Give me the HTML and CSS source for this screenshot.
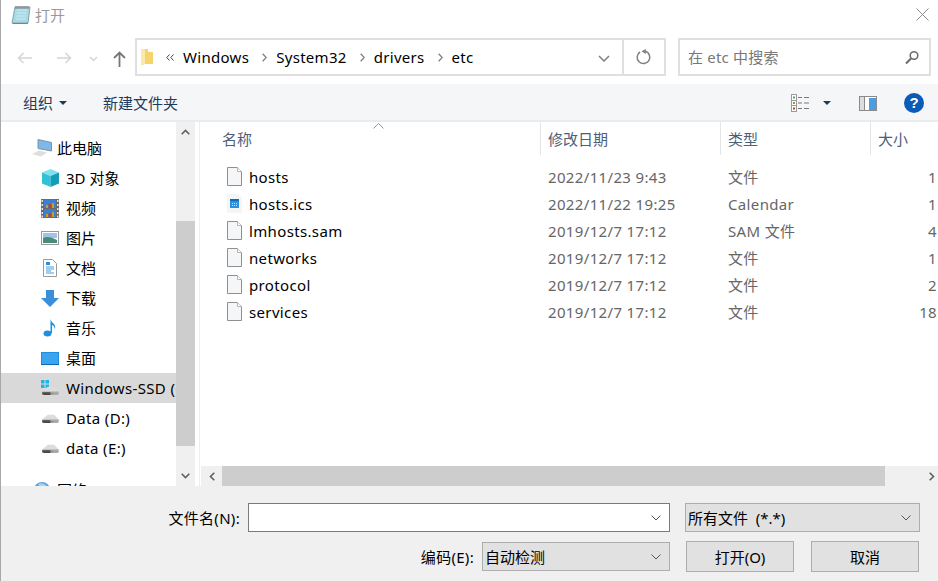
FILE: index.html
```html
<!DOCTYPE html>
<html lang="zh-CN">
<head>
    <meta charset="UTF-8">
    <title>打开</title>
    <link rel="stylesheet" href="styles.css">
</head>
<body>
    <svg class="defs" width="0" height="0">
        <symbol id="file" viewBox="0 0 15 19">
            <path d="M.5.5h10l4 4v14H.5z" fill="#f5f6f7" stroke="#8f8f8f"/>
            <path d="M10.500.5v4h4" fill="#fff" stroke="#b5b5b5"/>
        </symbol>
        <symbol id="drive" viewBox="0 0 20 12">
            <path d="M1 7 7 2h7l5 5-1 4H2z" fill="#dcdcdc"/>
            <path d="M1 7h18v3l-2 1H3l-2-1z" fill="#a9a9a9"/>
            <path d="M1 8h9v3H3l-2-1z" fill="#4b4b4b"/>
            <path d="M10 9h3v1h-3z" fill="#35b558"/>
        </symbol>
    </svg>

    <div class="dialog">
        <header class="titlebar">
            <svg class="title-icon" width="20" height="20" viewBox="0 0 20 20">
                <path d="M4 2h15l-2 16H1z" fill="#a9d9e6" stroke="#7fa7ae"/>
                <path d="M17 18h-16l1 1h15z" fill="#8a8170"/>
                <path d="M6 5h10M5.600 8h10M5.200 11h10M4.800 14h10" stroke="#c9ecf3"/>
                <path d="M5 1v3M7 1v3M9 1v3M11 1v3M13 1v3M15 1v3M17 1v3" stroke="#777"/>
            </svg>
            <span class="title-text">打开</span>
            <svg class="close-icon" width="13" height="13" viewBox="0 0 13 13">
                <path d="M.5.5l12 12M12.500.5l-12 12" stroke="#8c8c8c" fill="none"/>
            </svg>
        </header>

        <nav class="navbar">
            <svg class="nav-back" width="16" height="12" viewBox="0 0 16 12"><path d="M15 6H1.500M6.500 1l-5 5 5 5" stroke="#d5d5d5" stroke-width="1.500" fill="none"/></svg>
            <svg class="nav-forward" width="16" height="12" viewBox="0 0 16 12"><path d="M1 6h13.500M9.500 1l5 5-5 5" stroke="#d5d5d5" stroke-width="1.500" fill="none"/></svg>
            <svg class="nav-down" width="9" height="6" viewBox="0 0 9 6"><path d="M1 1l3.500 3.500L8 1" stroke="#d5d5d5" stroke-width="1.500" fill="none"/></svg>
            <svg class="nav-up" width="13" height="16" viewBox="0 0 13 16"><path d="M6.500 16V2M1 7l5.500-5.500L12 7" stroke="#777" stroke-width="1.800" fill="none"/></svg>
            <div class="address">
                <div class="crumbs">
                    <svg class="folder" width="13" height="18" viewBox="0 0 13 18">
                        <path d="M0 1h7v3h5v12H4l-4 1z" fill="#f6d36c"/>
                        <path d="M0 1h4v15l-4 1z" fill="#fbe9a9"/>
                    </svg>
                    <svg class="crumb-more" width="8" height="7" viewBox="0 0 8 7"><path d="M3.500.5.800 3.500l2.700 3M7.500.5 4.800 3.500l2.700 3" stroke="#444" fill="none"/></svg>
                    <span>Windows</span>
                    <svg class="crumb-sep" width="5" height="9" viewBox="0 0 5 9"><path d="M.7.7l3.500 3.800L.7 8.300" stroke="#808080" stroke-width="1.300" fill="none"/></svg>
                    <span>System32</span>
                    <svg class="crumb-sep" width="5" height="9" viewBox="0 0 5 9"><path d="M.7.7l3.500 3.800L.7 8.300" stroke="#808080" stroke-width="1.300" fill="none"/></svg>
                    <span>drivers</span>
                    <svg class="crumb-sep" width="5" height="9" viewBox="0 0 5 9"><path d="M.7.7l3.500 3.800L.7 8.300" stroke="#808080" stroke-width="1.300" fill="none"/></svg>
                    <span>etc</span>
                    <svg class="crumb-drop" width="12" height="7" viewBox="0 0 12 7"><path d="M1 1l5 5 5-5" stroke="#808080" stroke-width="1.500" fill="none"/></svg>
                </div>
                <div class="refresh">
                    <svg width="16" height="16" viewBox="0 0 16 16"><path d="M9.500 2.300A6.300 6.300 0 1 1 4 3" stroke="#808080" stroke-width="1.500" fill="none"/><path d="M9.800 0v5L5.500 2.300z" fill="#808080"/></svg>
                </div>
            </div>
            <div class="search">
                <span>在 etc 中搜索</span>
                <svg width="14" height="15" viewBox="0 0 14 15"><circle cx="9" cy="5.500" r="3.800" stroke="#6e6e6e" stroke-width="1.600" fill="none"/><path d="M6 8.500 1 13.500" stroke="#6e6e6e" stroke-width="2.200"/></svg>
            </div>
        </nav>

        <div class="toolbar">
            <button class="tool">组织<i class="caret"></i></button>
            <button class="tool tool-new">新建文件夹</button>
            <div class="tool-right">
                <svg class="view-icon" width="18" height="18" viewBox="0 0 18 18">
                    <rect x=".5" y=".5" width="5" height="17" fill="#fff" stroke="#9a9a9a"/>
                    <path d="M1 6.500h4M1 11.500h4" stroke="#9a9a9a"/>
                    <path d="M2 2.500h2v2H2z" fill="#5a9a9a"/><path d="M2 8h2v2H2z" fill="#9a9a40"/><path d="M2 13.500h2v2H2z" fill="#a0502a"/>
                    <path d="M7 3.500h4M13 3.500h5M7 9h4M13 9h5M7 14.500h4M13 14.500h5" stroke="#777"/>
                </svg>
                <i class="caret caret-view"></i>
                <svg class="pane-icon" width="18" height="15" viewBox="0 0 18 15">
                    <rect x=".5" y=".5" width="17" height="14" fill="#fff" stroke="#8a8a8a"/>
                    <path d="M1 1h4v13H1z" fill="#ddd"/><path d="M5.500 1v13" stroke="#8a8a8a"/>
                    <path d="M10 2h7v12h-7z" fill="#4b9ce2"/>
                </svg>
                <div class="help">?</div>
            </div>
        </div>

        <div class="content">
            <aside class="sidebar">
                <ul class="tree">
                    <li class="tree-row tree-root">
                        <svg width="20" height="18" viewBox="0 0 20 18">
                            <path d="M6 .5l13.500 3v8.500L6 9.500z" fill="#7db8e8" stroke="#7d93a8"/>
                            <path d="M0 15l7-3.500 8 2-6 4z" fill="#dedede"/>
                        </svg>
                        <span>此电脑</span>
                    </li>
                    <li class="tree-row">
                        <svg width="19" height="18" viewBox="0 0 19 18">
                            <path d="M9.500 0 18 3.500 9.500 7 1 3.500z" fill="#7fe3ee"/>
                            <path d="M1 3.500 9.500 7v11L1 14.500z" fill="#2fc3d8"/>
                            <path d="M18 3.500 9.500 7v11l8.500-3.500z" fill="#159cb8"/>
                        </svg>
                        <span>3D 对象</span>
                    </li>
                    <li class="tree-row">
                        <svg width="18" height="19" viewBox="0 0 18 19">
                            <rect width="18" height="19" fill="#6a6a6a"/>
                            <path d="M.5 1h1.500v2H.5zM.5 5h1.500v2H.5zM.5 9h1.500v2H.5zM.5 13h1.500v2H.5zM.5 16.500h1.500v2H.5zM16 1h1.500v2H16zM16 5h1.500v2H16zM16 9h1.500v2H16zM16 13h1.500v2H16zM16 16.500h1.500v2H16z" fill="#e4e4e4"/>
                            <path d="M3 1h12v8H3zM3 10h12v8H3z" fill="#3f7fd0"/>
                            <path d="M5 6h2v3H5zM11 4h2v5h-2zM5 15h2v3H5zM11 13h2v5h-2z" fill="#c8a028"/>
                            <path d="M7.500 5h3v4h-3zM7.500 14h3v4h-3z" fill="#b04a30"/>
                        </svg>
                        <span>视频</span>
                    </li>
                    <li class="tree-row">
                        <svg width="18" height="14" viewBox="0 0 18 14">
                            <rect x=".5" y=".5" width="17" height="13" fill="#fff" stroke="#9a9a9a"/>
                            <path d="M2 2h14v5H2z" fill="#9ec4ea"/>
                            <path d="M2 7c4-2 8-1 14 2v3H2z" fill="#4a8a7a"/>
                        </svg>
                        <span>图片</span>
                    </li>
                    <li class="tree-row">
                        <svg width="18" height="18" viewBox="0 0 18 18">
                            <path d="M2.500.5h9l4 4v13h-13z" fill="#fff" stroke="#9a9a9a"/>
                            <path d="M5 3h4v3H5z" fill="#2d8fd8"/>
                            <path d="M5 8h8M5 10h8M5 12h5M5 14h8" stroke="#3d9ce0"/>
                        </svg>
                        <span>文档</span>
                    </li>
                    <li class="tree-row">
                        <svg width="18" height="17" viewBox="0 0 18 17">
                            <path d="M5 0h8v8h5l-9 9-9-9h5z" fill="#3a8edb"/>
                        </svg>
                        <span>下载</span>
                    </li>
                    <li class="tree-row">
                        <svg width="18" height="18" viewBox="0 0 18 18">
                            <ellipse cx="6.500" cy="14.500" rx="4" ry="3" fill="#1f8fe0"/>
                            <path d="M9.500 14V0c.5 4 6 4.500 4.500 10-1-3-2-4-3-4v8z" fill="#1f8fe0"/>
                        </svg>
                        <span>音乐</span>
                    </li>
                    <li class="tree-row">
                        <svg width="18" height="13" viewBox="0 0 18 13">
                            <rect width="18" height="13" fill="#1f8fe0"/>
                            <path d="M1 1h16v11H1z" fill="#3aa4ee"/><path d="M0 12h18v1H0z" fill="#0d6ab8"/>
                        </svg>
                        <span>桌面</span>
                    </li>
                    <li class="tree-row is-selected">
                        <svg width="19" height="16" viewBox="0 0 19 16">
                            <path d="M0 0h3.500v3.500H0zM4.500 0H8v3.500H4.500zM0 4.500h3.500V8H0zM4.500 4.500H8V8H4.500z" fill="#1eb4e8"/>
                            <use href="#drive" y="5" width="19" height="11"/>
                        </svg>
                        <span class="latin">Windows-SSD (C:)</span>
                    </li>
                    <li class="tree-row">
                        <svg width="19" height="11"><use href="#drive" width="19" height="11"/></svg>
                        <span class="latin">Data (D:)</span>
                    </li>
                    <li class="tree-row">
                        <svg width="19" height="11"><use href="#drive" width="19" height="11"/></svg>
                        <span class="latin">data (E:)</span>
                    </li>
                    <li class="tree-row tree-root tree-network">
                        <svg width="20" height="18" viewBox="0 0 20 18">
                            <circle cx="10" cy="9" r="8" fill="#5aa0d8"/>
                            <path d="M6 3c4-2 8 0 9 3-3 2-7 1-9-3z" fill="#a8d4f0"/>
                        </svg>
                        <span>网络</span>
                    </li>
                </ul>
                <div class="vscroll">
                    <div class="scroll-btn">
                        <svg width="9" height="6" viewBox="0 0 9 6"><path d="M.7 5.300 4.500 1.500l3.800 3.800" stroke="#606060" stroke-width="1.600" fill="none"/></svg>
                    </div>
                    <div class="vscroll-track"><div class="vscroll-thumb"></div></div>
                    <div class="scroll-btn">
                        <svg width="9" height="6" viewBox="0 0 9 6"><path d="M.7.700 4.500 4.500l3.800-3.800" stroke="#606060" stroke-width="1.600" fill="none"/></svg>
                    </div>
                </div>
            </aside>

            <main class="files">
                <div class="list-area">
                    <div class="list-head">
                        <div class="col-head col-name">名称<svg class="sort" width="11" height="6" viewBox="0 0 11 6"><path d="M.5 5.500l5-5 5 5" stroke="#999" fill="none"/></svg></div>
                        <div class="col-head col-date">修改日期</div>
                        <div class="col-head col-type">类型</div>
                        <div class="col-head col-size">大小</div>
                    </div>
                    <div class="list-body">
                        <div class="file-row">
                            <div class="cell-name"><svg width="15" height="19"><use href="#file"/></svg>hosts</div>
                            <div class="cell">2022/11/23 9:43</div><div class="cell">文件</div><div class="cell-size">1 KB</div>
                        </div>
                        <div class="file-row">
                            <div class="cell-name">
                                <svg width="15" height="19" viewBox="0 0 15 19">
                                    <path d="M0 0h11l4 4v15H0z" fill="#f3f5f7"/>
                                    <path d="M3 5h9v9H3z" fill="#2e8fdc"/><path d="M3 5h9v2H3z" fill="#136bb5"/>
                                    <path d="M5 9h1v1H5zM7 9h1v1H7zM9 9h1v1H9zM5 11h1v1H5zM7 11h1v1H7zM9 11h1v1H9z" fill="#bfe0f8"/>
                                </svg>hosts.ics</div>
                            <div class="cell">2022/11/22 19:25</div><div class="cell">Calendar</div><div class="cell-size">1 KB</div>
                        </div>
                        <div class="file-row">
                            <div class="cell-name"><svg width="15" height="19"><use href="#file"/></svg>lmhosts.sam</div>
                            <div class="cell">2019/12/7 17:12</div><div class="cell">SAM 文件</div><div class="cell-size">4 KB</div>
                        </div>
                        <div class="file-row">
                            <div class="cell-name"><svg width="15" height="19"><use href="#file"/></svg>networks</div>
                            <div class="cell">2019/12/7 17:12</div><div class="cell">文件</div><div class="cell-size">1 KB</div>
                        </div>
                        <div class="file-row">
                            <div class="cell-name"><svg width="15" height="19"><use href="#file"/></svg>protocol</div>
                            <div class="cell">2019/12/7 17:12</div><div class="cell">文件</div><div class="cell-size">2 KB</div>
                        </div>
                        <div class="file-row">
                            <div class="cell-name"><svg width="15" height="19"><use href="#file"/></svg>services</div>
                            <div class="cell">2019/12/7 17:12</div><div class="cell">文件</div><div class="cell-size">18 KB</div>
                        </div>
                    </div>
                </div>
                <div class="hscroll">
                    <div class="hscroll-btn">
                        <svg width="6" height="9" viewBox="0 0 6 9"><path d="M5.300.7 1.500 4.500l3.800 3.800" stroke="#606060" stroke-width="1.600" fill="none"/></svg>
                    </div>
                    <div class="hscroll-thumb"></div>
                    <div class="hscroll-rest">
                        <svg width="6" height="9" viewBox="0 0 6 9"><path d="M.7.7l3.800 3.800L.7 8.300" stroke="#606060" stroke-width="1.600" fill="none"/></svg>
                    </div>
                </div>
            </main>
        </div>

        <footer class="footer">
            <div class="form-row">
                <label class="field-label">文件名(N):</label>
                <div class="combo combo-name"><svg width="10" height="6" viewBox="0 0 10 6"><path d="M.5.500 5 5 9.500.5" stroke="#555" fill="none"/></svg></div>
                <div class="combo combo-filter"><span>所有文件&nbsp; (*.*)</span><svg width="10" height="6" viewBox="0 0 10 6"><path d="M.5.500 5 5 9.500.5" stroke="#555" fill="none"/></svg></div>
            </div>
            <div class="form-row form-row-second">
                <label class="field-label">编码(E):</label>
                <div class="combo combo-encoding"><span>自动检测</span><svg width="10" height="6" viewBox="0 0 10 6"><path d="M.5.500 5 5 9.500.5" stroke="#555" fill="none"/></svg></div>
                <button class="btn btn-open">打开(O)</button>
                <button class="btn btn-cancel">取消</button>
            </div>
        </footer>
    </div>
</body>
</html>
```

FILE: styles.css
```css
* {
    box-sizing: border-box;
}
html, body {
    margin: 0;
    padding: 0;
    width: 938px;
    height: 581px;
    overflow: hidden;
}
body {
    font-family: "Noto Sans", "Noto Sans CJK SC", sans-serif;
    font-size: 15px;
    line-height: 20px;
    color: #000;
    background: #fff;
}
svg {
    display: block;
    flex: none;
}
.defs {
    position: absolute;
}
.latin {
    letter-spacing: .35px;
}
.dialog {
    width: 938px;
    height: 581px;
    display: flex;
    flex-direction: column;
    border-left: 1px solid #a8a8a8;
    overflow: hidden;
}

/* title */
.titlebar {
    height: 38px;
    display: flex;
    align-items: flex-start;
    padding: 5px 9px 0 10px;
}
.title-text {
    margin-left: 4px;
    color: #9a9a9a;
}
.close-icon {
    margin-left: auto;
    margin-top: 3px;
}

/* nav */
.navbar {
    height: 46px;
    display: flex;
    align-items: flex-start;
}
.nav-back {
    margin: 14px 0 0 16px;
}
.nav-forward {
    margin: 14px 0 0 23px;
}
.nav-down {
    margin: 18px 0 0 17px;
}
.nav-up {
    margin: 13px 0 0 15px;
}
.address {
    margin-left: 9px;
    width: 531px;
    height: 38px;
    display: flex;
    border: 2px solid #dfdfdf;
}
.crumbs {
    flex: 1;
    display: flex;
    align-items: center;
    padding-left: 4px;
    letter-spacing: .3px;
}
.crumb-more {
    margin: 0 9px 0 12px;
}
.crumb-sep {
    margin: 0 9px 0 13px;
}
.crumb-drop {
    margin: 2px 12px 0 auto;
}
.refresh {
    width: 42px;
    border-left: 2px solid #dfdfdf;
    display: flex;
    align-items: center;
    justify-content: center;
}
.search {
    margin: 0 0 0 12px;
    width: 253px;
    height: 38px;
    display: flex;
    align-items: center;
    justify-content: space-between;
    padding: 0 10px 0 8px;
    border: 2px solid #dfdfdf;
    color: #777;
    letter-spacing: .2px;
}

/* toolbar */
.toolbar {
    height: 38px;
    display: flex;
    align-items: center;
    padding: 2px 14px 0 22px;
    background: #f5f6f7;
    border-bottom: 2px solid #e9ebee;
}
.tool {
    border: 0;
    padding: 0;
    background: none;
    font: inherit;
    color: #1f3a5c;
    display: flex;
    align-items: center;
}
.tool-new {
    margin-left: 36px;
}
.caret {
    display: inline-block;
    width: 0;
    height: 0;
    margin-left: 6px;
    border: 4px solid transparent;
    border-top: 4px solid #1f3a5c;
    border-bottom: 0;
}
.tool-right {
    margin-left: auto;
    display: flex;
    align-items: center;
}
.caret-view {
    margin-left: 14px;
}
.pane-icon {
    margin-left: 28px;
}
.help {
    width: 20px;
    height: 20px;
    margin-left: 27px;
    border-radius: 50%;
    background: #0a5cb8;
    color: #fff;
    font-family: "Liberation Sans", sans-serif;
    font-weight: bold;
    line-height: 20px;
    text-align: center;
}

/* main area */
.content {
    height: 364px;
    display: flex;
}
.sidebar {
    width: 194px;
    flex: none;
    display: flex;
}
.tree {
    list-style: none;
    margin: 11px 0 0;
    padding: 0;
    width: 175px;
    height: 353px;
    overflow: hidden;
}
.tree-row {
    height: 30px;
    display: flex;
    align-items: center;
    white-space: nowrap;
    overflow: hidden;
    padding-left: 40px;
}
.tree-row svg + span {
    margin-left: auto;
    width: 110px;
    flex: none;
}
.tree-root {
    padding-left: 31px;
}
.tree-root svg + span {
    width: 119px;
}
.tree-network {
    margin-top: 12px;
}
.is-selected {
    background: #d9d9d9;
}
.vscroll {
    width: 19px;
    display: flex;
    flex-direction: column;
    background: #f0f0f0;
}
.scroll-btn {
    height: 20px;
    display: flex;
    align-items: center;
    justify-content: center;
}
.vscroll-track {
    flex: 1;
    padding: 79px 0 20px;
    display: flex;
}
.vscroll-thumb {
    flex: 1;
    background: #cdcdcd;
}
.files {
    flex: 1;
    min-width: 0;
    margin-left: 4px;
    border-left: 1px solid #eeeeee;
    display: flex;
    flex-direction: column;
}
.list-area {
    flex: 1;
    overflow: hidden;
}
.list-head {
    height: 33px;
    display: grid;
    grid-template-columns: 341px 180px 150px 100px;
    width: 800px;
}
.col-head {
    display: flex;
    align-items: center;
    padding-left: 7px;
    color: #4c607a;
    border-right: 1px solid #e5e5e5;
}
.col-name {
    position: relative;
    padding-left: 22px;
}
.sort {
    position: absolute;
    left: 173px;
    top: 1px;
}
.list-body {
    padding-top: 8px;
    color: #666;
}
.file-row {
    height: 27px;
    width: 800px;
    display: grid;
    grid-template-columns: 341px 180px 150px 90px;
    align-items: center;
    letter-spacing: .35px;
}
.cell-name {
    display: flex;
    align-items: center;
    gap: 7px;
    padding-left: 27px;
    color: #000;
}
.cell {
    padding-left: 7px;
}
.cell-size {
    text-align: right;
}
.hscroll {
    height: 20px;
    margin-left: 1px;
    display: flex;
    background: #f0f0f0;
}
.hscroll-btn {
    width: 21px;
    display: flex;
    align-items: center;
    justify-content: center;
}
.hscroll-thumb {
    width: 663px;
    background: #cdcdcd;
}
.hscroll-rest {
    flex: 1;
    display: flex;
    align-items: center;
    justify-content: flex-end;
    padding-right: 3px;
}

/* bottom form */
.footer {
    flex: 1;
    background: #f0f0f0;
    padding-top: 17px;
}
.form-row {
    display: flex;
    align-items: center;
    height: 29px;
}
.form-row-second {
    margin-top: 10px;
}
.field-label {
    width: 239px;
    text-align: right;
    letter-spacing: .3px;
}
.form-row-second .field-label {
    width: 473px;
}
.combo {
    height: 29px;
    display: flex;
    align-items: center;
    justify-content: space-between;
    padding: 0 8px 0 2px;
    background: #e1e1e1;
    border: 1px solid #adadad;
}
.combo-name {
    margin-left: 8px;
    width: 422px;
    justify-content: flex-end;
    background: #fff;
    border: 1px solid #7a7a7a;
}
.combo-filter {
    margin-left: 15px;
    width: 235px;
}
.combo-encoding {
    margin-left: 8px;
    width: 188px;
}
.btn {
    height: 31px;
    width: 108px;
    padding: 0;
    border: 1px solid #adadad;
    background: #e1e1e1;
    font: inherit;
    color: #000;
}
.btn-open {
    margin-left: 16px;
}
.btn-cancel {
    margin-left: 17px;
}
```
